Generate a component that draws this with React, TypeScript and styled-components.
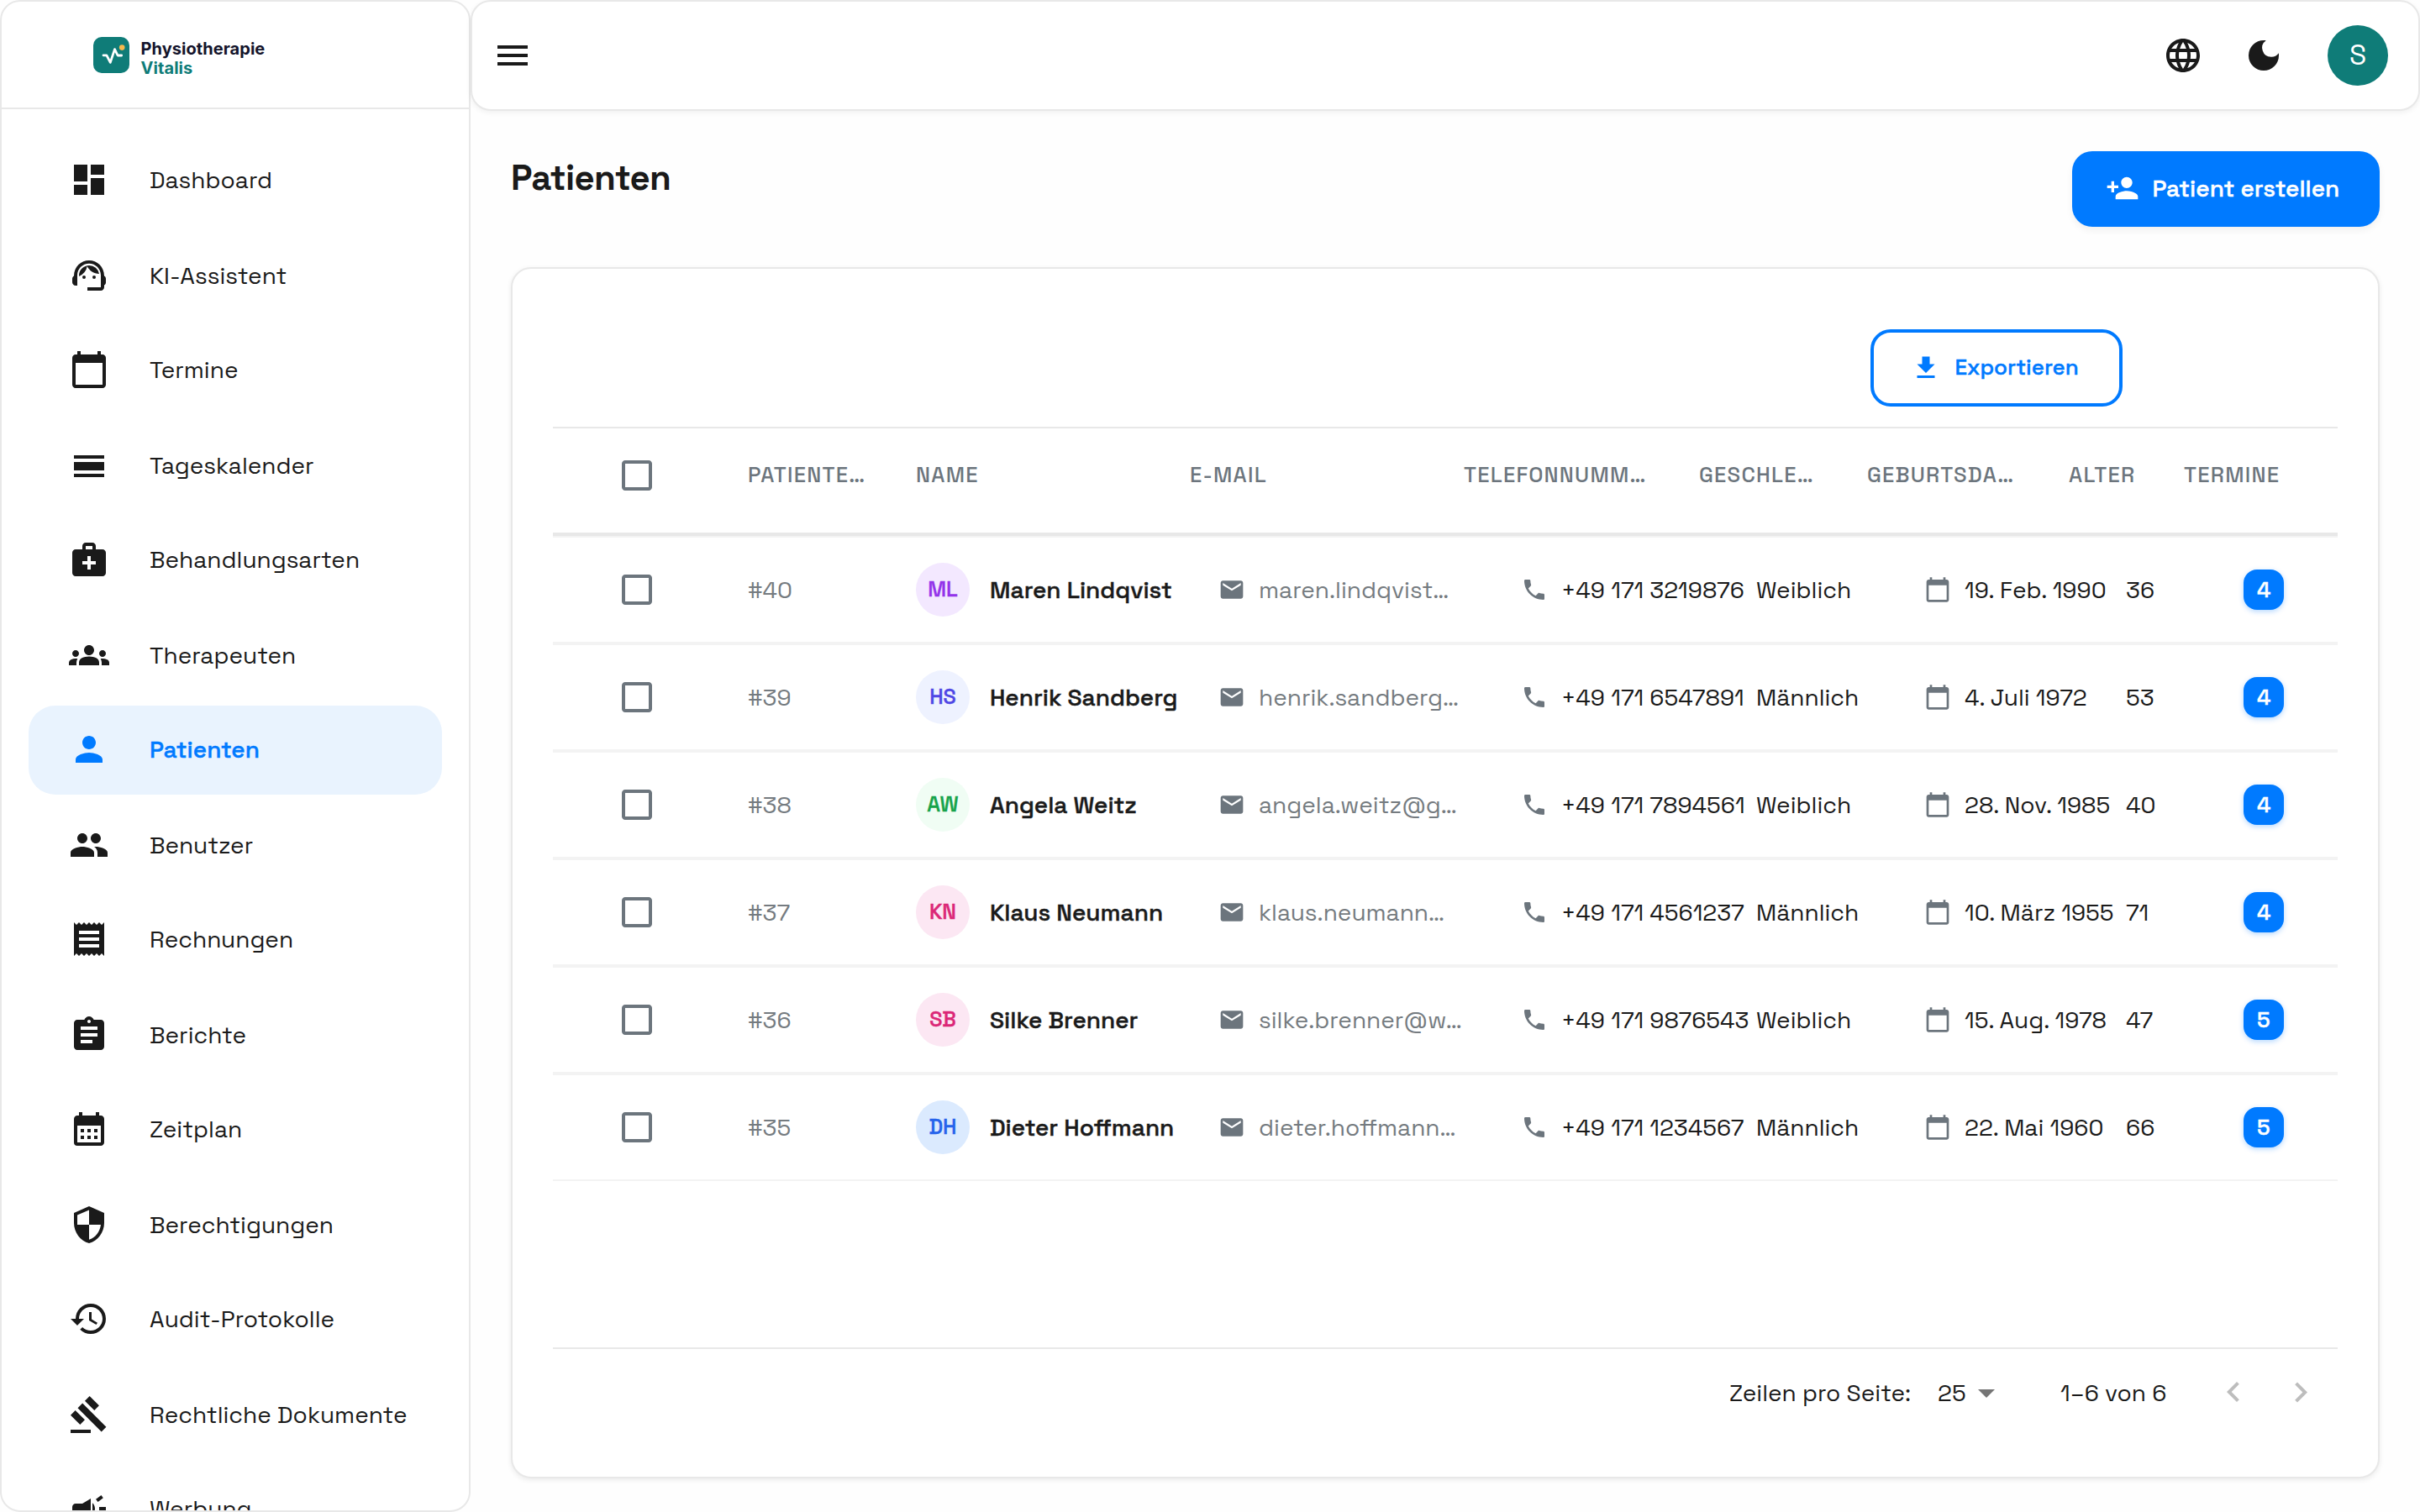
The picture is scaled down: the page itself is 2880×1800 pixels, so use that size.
import React from "react";
import styled, { createGlobalStyle, css } from "styled-components";
import type { IconType } from "react-icons";
import {
  MdArrowDropDown,
  MdAssignment,
  MdCalendarMonth,
  MdCalendarToday,
  MdCampaign,
  MdDarkMode,
  MdDashboard,
  MdEmail,
  MdGavel,
  MdGroups,
  MdHistory,
  MdLanguage,
  MdMedicalServices,
  MdMenu,
  MdPeople,
  MdPerson,
  MdPersonAdd,
  MdPhone,
  MdReceipt,
  MdSecurity,
  MdSupportAgent,
} from "react-icons/md";

const color = {
  text: "#1a1a1a",
  muted: "#6c757d",
  soft: "#757b80",
  primary: "#007aff",
  brand: "#0f7c78",
  line: "#e8e8e8",
  rowLine: "#f3f3f3",
  page: "#fefefe",
};

/* Sits between the medium and bold cuts of the family. */
const semibold = css`
  font-weight: 500;
  -webkit-text-stroke: 0.45px currentColor;
`;

const GlobalStyle = createGlobalStyle`
  * { box-sizing: border-box; }
  body {
    margin: 0;
    background: ${color.page};
    color: ${color.text};
    font-family: "Space Grotesk", Inter, "Liberation Sans", sans-serif;
    font-size: 28px;
  }
`;

const Shell = styled.div`
  display: flex;
  width: 2880px;
  height: 1800px;
  overflow: hidden;
`;

/* Sidebar */

const Sidebar = styled.aside`
  display: flex;
  flex-direction: column;
  flex: none;
  width: 560px;
  height: 1800px;
  border: 2px solid ${color.line};
  border-radius: 24px;
  background: #fff;
  overflow: hidden;
`;

const Brand = styled.div`
  display: flex;
  flex: none;
  align-items: flex-start;
  gap: 13.6px;
  height: 128px;
  padding: 42px 0 0 109px;
  border-bottom: 2px solid ${color.line};
`;

const BrandText = styled.div`
  padding-top: 3px;
  color: #14142b;
  font: 700 20px/22px Inter, sans-serif;
  letter-spacing: 0.04px;
`;

const BrandAccent = styled.div`
  padding-top: 1px;
  color: ${color.brand};
`;

const Nav = styled.nav`
  display: flex;
  flex-direction: column;
  gap: 7px;
  padding: 32px 32px 0;
`;

const NavItem = styled.a<{ $active?: boolean }>`
  display: flex;
  flex: none;
  align-items: center;
  gap: 48px;
  height: 106px;
  padding-left: 48px;
  border-radius: 32px;
  background: ${(p) => (p.$active ? "#e9f3fe" : "transparent")};
  color: ${(p) => (p.$active ? color.primary : color.text)};
  white-space: nowrap;
  ${(p) => p.$active && semibold}

  &:nth-child(odd) {
    padding-bottom: 2px;
  }

  svg {
    flex: none;
    stroke: none;
  }
`;

/* Top bar */

const Main = styled.main`
  display: flex;
  flex: 1;
  flex-direction: column;
`;

const TopBar = styled.header`
  display: flex;
  flex: none;
  align-items: center;
  height: 132px;
  padding: 0 36px 0 24px;
  border: 2px solid ${color.line};
  border-radius: 24px;
  background: #fff;
  box-shadow: 0 2px 6px rgba(0, 0, 0, 0.06);
`;

const TopActions = styled.div`
  display: flex;
  align-items: center;
  gap: 48px;
  margin-left: auto;
`;

const UserAvatar = styled.div`
  display: grid;
  place-items: center;
  width: 72px;
  height: 72px;
  margin-left: 4px;
  border-radius: 50%;
  background: ${color.brand};
  color: #fff;
  font-size: 33px;
`;

/* Page */

const Page = styled.section`
  display: flex;
  flex-direction: column;
  padding: 48px 48px 0;
`;

const PageHead = styled.div`
  display: flex;
  align-items: flex-start;
  justify-content: space-between;
  height: 138px;
`;

const Title = styled.h1`
  margin: 0;
  font-size: 42px;
  font-weight: 700;
  line-height: 64px;
  letter-spacing: -0.65px;
`;

const Button = styled.button<{ $outlined?: boolean }>`
  display: flex;
  align-items: center;
  gap: ${(p) => (p.$outlined ? 16.5 : 15.5)}px;
  width: ${(p) => (p.$outlined ? 300 : 366)}px;
  height: ${(p) => (p.$outlined ? 92 : 90)}px;
  padding: ${(p) => (p.$outlined ? "0 0 0 44px" : "0 0 2px 40px")};
  border: ${(p) => (p.$outlined ? `4px solid ${color.primary}` : "0")};
  border-radius: 24px;
  background: ${(p) => (p.$outlined ? "transparent" : color.primary)};
  color: ${(p) => (p.$outlined ? color.primary : "#fff")};
  box-shadow: ${(p) => (p.$outlined ? "none" : "0 4px 8px rgba(0, 0, 0, 0.06)")};
  font-family: inherit;
  font-size: ${(p) => (p.$outlined ? 26 : 28)}px;
  white-space: nowrap;
`;

const ButtonLabel = styled.span<{ $lift?: number }>`
  padding-bottom: ${(p) => p.$lift ?? 0}px;
  ${semibold}
`;

const Card = styled.div`
  display: flex;
  flex-direction: column;
  height: 1442px;
  padding: 48px;
  border: 2px solid ${color.line};
  border-radius: 24px;
  background: #fff;
  box-shadow: 0 2px 6px rgba(0, 0, 0, 0.08);
`;

const Toolbar = styled.div`
  display: flex;
  justify-content: flex-end;
  height: 142px;
  padding: 24px 256px 0 0;
  border-bottom: 2px solid ${color.line};
`;

/* Table */

const HeadRow = styled.div`
  display: grid;
  grid-template-columns: 232px 200px 326px 326px 280px 200px 240px 137px 1fr;
  align-items: center;
  height: 128px;
  padding-bottom: 12px;
  border-bottom: 4px solid ${color.line};
  color: ${color.muted};
  font-size: 25.6px;
  font-weight: 500;
  letter-spacing: 1.2px;
  white-space: nowrap;
`;

const HeadLabel = styled.span`
  padding-bottom: 3px;
`;

const Row = styled.div`
  display: grid;
  grid-template-columns: 232px 200px 360px 360px 280px 200px 240px 140px 1fr;
  align-items: center;
  height: 128px;
  border-top: 2px solid ${color.rowLine};
  border-bottom: 2px solid ${color.rowLine};
`;

const CheckCell = styled.div`
  display: flex;
  padding-left: 76px;
  color: ${color.muted};
`;

const Cell = styled.div<{ $gap?: number; $muted?: boolean }>`
  display: flex;
  align-items: center;
  gap: ${(p) => p.$gap ?? 0}px;
  color: ${(p) => (p.$muted ? color.soft : color.text)};
  white-space: nowrap;

  > svg {
    flex: none;
    color: ${color.muted};
  }
`;

const Initials = styled.div<{ $bg: string; $fg: string }>`
  display: grid;
  flex: none;
  place-items: center;
  width: 64px;
  height: 64px;
  padding-bottom: 2px;
  border-radius: 50%;
  background: ${(p) => p.$bg};
  color: ${(p) => p.$fg};
  font-size: 25px;
  ${semibold}
`;

const Name = styled.span`
  ${semibold}
`;

const Badge = styled.span`
  height: 48px;
  padding: 0 16px;
  border-radius: 16px;
  background: ${color.primary};
  box-shadow: 0 2px 6px rgba(0, 122, 255, 0.3);
  color: #fff;
  font-size: 26px;
  line-height: 48px;
  ${semibold}
`;

/* Footer */

const Footer = styled.div`
  display: flex;
  align-items: center;
  justify-content: flex-end;
  height: 106px;
  margin-top: auto;
  padding-right: 20px;
  border-top: 2px solid ${color.line};
`;

const FooterText = styled.span<{ $w: number }>`
  width: ${(p) => p.$w}px;
  white-space: nowrap;
`;

const SelectArrow = styled(MdArrowDropDown)`
  margin-right: 64px;
  color: #757575;
`;

const Pager = styled.div`
  display: flex;
  gap: 32px;
  color: #bdbdbd;
`;

/* Drawings */

const Glyph = ({ d, size = 48 }: { d: string; size?: number | string }) => (
  <svg width={size} height={size} viewBox="0 0 24 24" fill="currentColor" aria-hidden>
    <path d={d} />
  </svg>
);

const DayView = ({ size }: { size?: number | string }) => (
  <Glyph size={size} d="M3 17h18v2H3zm0-7h18v5H3zm0-4h18v2H3z" />
);

const CheckBox = () => (
  <Glyph d="M19 5v14H5V5h14m0-2H5c-1.1 0-2 .9-2 2v14c0 1.1.9 2 2 2h14c1.1 0 2-.9 2-2V5c0-1.1-.9-2-2-2z" />
);

const LogoMark = () => (
  <svg width="43" height="43" viewBox="0 0 43 43" aria-hidden>
    <rect width="43" height="43" rx="10" fill={color.brand} />
    <path
      d="M12 21.8h3.9l4.4 8.6 5.2-15.8 3.6 7.4h4.6"
      fill="none"
      stroke="#fff"
      strokeWidth="2.8"
      strokeLinecap="round"
      strokeLinejoin="round"
    />
    <circle cx="34.2" cy="12.6" r="3.3" fill="#f5b94e" />
  </svg>
);

/* Data */

const navItems: { icon: IconType | typeof DayView; label: string; active?: boolean }[] = [
  { icon: MdDashboard, label: "Dashboard" },
  { icon: MdSupportAgent, label: "KI-Assistent" },
  { icon: MdCalendarToday, label: "Termine" },
  { icon: DayView, label: "Tageskalender" },
  { icon: MdMedicalServices, label: "Behandlungsarten" },
  { icon: MdGroups, label: "Therapeuten" },
  { icon: MdPerson, label: "Patienten", active: true },
  { icon: MdPeople, label: "Benutzer" },
  { icon: MdReceipt, label: "Rechnungen" },
  { icon: MdAssignment, label: "Berichte" },
  { icon: MdCalendarMonth, label: "Zeitplan" },
  { icon: MdSecurity, label: "Berechtigungen" },
  { icon: MdHistory, label: "Audit-Protokolle" },
  { icon: MdGavel, label: "Rechtliche Dokumente" },
  { icon: MdCampaign, label: "Werbung" },
];

const columns = [
  "PATIENTE…",
  "NAME",
  "E-MAIL",
  "TELEFONNUMM…",
  "GESCHLE…",
  "GEBURTSDA…",
  "ALTER",
  "TERMINE",
];

const patients = [
  { id: "#40", initials: "ML", bg: "#f3e8ff", fg: "#9333ea", name: "Maren Lindqvist", mail: "maren.lindqvist…", phone: "+49 171 3219876", gender: "Weiblich", born: "19. Feb. 1990", age: 36, visits: 4 },
  { id: "#39", initials: "HS", bg: "#eef2ff", fg: "#4f46e5", name: "Henrik Sandberg", mail: "henrik.sandberg…", phone: "+49 171 6547891", gender: "Männlich", born: "4. Juli 1972", age: 53, visits: 4 },
  { id: "#38", initials: "AW", bg: "#f0fdf4", fg: "#16a34a", name: "Angela Weitz", mail: "angela.weitz@g…", phone: "+49 171 7894561", gender: "Weiblich", born: "28. Nov. 1985", age: 40, visits: 4 },
  { id: "#37", initials: "KN", bg: "#fce7f3", fg: "#db2777", name: "Klaus Neumann", mail: "klaus.neumann…", phone: "+49 171 4561237", gender: "Männlich", born: "10. März 1955", age: 71, visits: 4 },
  { id: "#36", initials: "SB", bg: "#fce7f3", fg: "#db2777", name: "Silke Brenner", mail: "silke.brenner@w…", phone: "+49 171 9876543", gender: "Weiblich", born: "15. Aug. 1978", age: 47, visits: 5 },
  { id: "#35", initials: "DH", bg: "#dbeafe", fg: "#2563eb", name: "Dieter Hoffmann", mail: "dieter.hoffmann…", phone: "+49 171 1234567", gender: "Männlich", born: "22. Mai 1960", age: 66, visits: 5 },
];

export default function App() {
  return (
    <>
      <GlobalStyle />
      <Shell>
        <Sidebar>
          <Brand>
            <LogoMark />
            <BrandText>
              Physiotherapie
              <BrandAccent>Vitalis</BrandAccent>
            </BrandText>
          </Brand>
          <Nav>
            {navItems.map(({ icon: Icon, label, active }) => (
              <NavItem key={label} $active={active}>
                <Icon size={48} />
                {label}
              </NavItem>
            ))}
          </Nav>
        </Sidebar>

        <Main>
          <TopBar>
            <MdMenu size={48} />
            <TopActions>
              <MdLanguage size={48} />
              <MdDarkMode size={48} />
              <UserAvatar>S</UserAvatar>
            </TopActions>
          </TopBar>

          <Page>
            <PageHead>
              <Title>Patienten</Title>
              <Button>
                <MdPersonAdd size={40} />
                <ButtonLabel>Patient erstellen</ButtonLabel>
              </Button>
            </PageHead>

            <Card>
              <Toolbar>
                <Button $outlined>
                  <Glyph size={36} d="M19 9h-4V3H9v6H5l7 7 7-7zM5 18v2h14v-2H5z" />
                  <ButtonLabel $lift={2}>Exportieren</ButtonLabel>
                </Button>
              </Toolbar>

              <HeadRow>
                <CheckCell>
                  <CheckBox />
                </CheckCell>
                {columns.map((label) => (
                  <HeadLabel key={label}>{label}</HeadLabel>
                ))}
              </HeadRow>

              {patients.map((p) => (
                <Row key={p.id}>
                  <CheckCell>
                    <CheckBox />
                  </CheckCell>
                  <Cell $muted>{p.id}</Cell>
                  <Cell $gap={24}>
                    <Initials $bg={p.bg} $fg={p.fg}>
                      {p.initials}
                    </Initials>
                    <Name>{p.name}</Name>
                  </Cell>
                  <Cell $gap={16} $muted>
                    <MdEmail size={32} />
                    {p.mail}
                  </Cell>
                  <Cell $gap={16}>
                    <MdPhone size={32} />
                    {p.phone}
                  </Cell>
                  <Cell>{p.gender}</Cell>
                  <Cell $gap={16}>
                    <MdCalendarToday size={32} />
                    {p.born}
                  </Cell>
                  <Cell>{p.age}</Cell>
                  <Cell>
                    <Badge>{p.visits}</Badge>
                  </Cell>
                </Row>
              ))}

              <Footer>
                <FooterText $w={248}>Zeilen pro Seite:</FooterText>
                <FooterText $w={34}>25</FooterText>
                <SelectArrow size={48} />
                <FooterText $w={182}>1–6 von 6</FooterText>
                <Pager>
                  <Glyph d="M15.41 16.09l-4.58-4.59 4.58-4.59L14 5.5l-6 6 6 6z" />
                  <Glyph d="M8.59 16.34l4.58-4.59-4.58-4.59L10 5.75l6 6-6 6z" />
                </Pager>
              </Footer>
            </Card>
          </Page>
        </Main>
      </Shell>
    </>
  );
}
